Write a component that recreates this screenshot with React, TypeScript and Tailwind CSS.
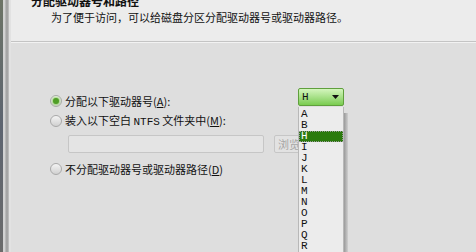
import { Fragment } from 'react';

const cjk = { fontFamily: '"Noto Sans CJK SC", "Liberation Sans", sans-serif' };
const mono = { fontFamily: '"Liberation Mono", "DejaVu Sans Mono", monospace' };

const letters = ['A', 'B', 'H', 'I', 'J', 'K', 'L', 'M', 'N', 'O', 'P', 'Q', 'R', 'S'];

function Radio({ checked }: { checked?: boolean }) {
  return (
    <span className="flex h-[12px] w-[12px] shrink-0 items-center justify-center rounded-full border border-[#a9a9a9] bg-gradient-to-b from-[#f4f4f4] to-[#d0d0d0]">
      {checked && (
        <span className="h-[6px] w-[6px] rounded-full bg-[#4f9e26] shadow-[0_0_2px_1px_#9fd77a]" />
      )}
    </span>
  );
}

function App() {
  return (
    <div className="flex h-[252px] w-[476px] overflow-hidden bg-[#dedede] text-[11px] text-[#111]" style={cjk}>
      {/* window behind + frame */}
      <div className="flex w-[11px] shrink-0">
        <div className="w-[3px] bg-gradient-to-b from-[#6d7466] via-[#5d6470] to-[#6b6b6b]" />
        <div className="w-[2px] bg-[#d2d2d2]" />
        <div className="w-[4px] bg-gradient-to-r from-[#c2c2c2] via-[#9c9c9c] to-[#c6c6c6]" />
        <div className="w-[2px] bg-[#e2e2e2]" />
      </div>

      <div className="relative flex flex-1 flex-col">
        {/* header */}
        <div className="h-[41px] bg-[#ececec]">
          <div className="mt-[-6px] pl-[20px] text-[12px] font-bold leading-[14px]">分配驱动器号和路径</div>
          <div className="mt-[2px] pl-[40px] leading-[14px]">为了便于访问，可以给磁盘分区分配驱动器号或驱动器路径。</div>
        </div>
        <div className="h-[1px] bg-[#c4c4c4]" />
        <div className="h-[1px] bg-[#f2f2f2]" />

        {/* body */}
        <div className="flex flex-col pl-[39px] pt-[51px]">
          <div className="flex h-[14px] items-center gap-[3px]">
            <Radio checked />
            <span>分配以下驱动器号(<span className="underline">A</span>):</span>
          </div>
          <div className="mt-[6px] flex h-[14px] items-center gap-[3px]">
            <Radio />
            <span>
              装入以下空白 <span style={mono}>NTFS</span> 文件夹中(<span className="underline">M</span>):
            </span>
          </div>
          <div className="mt-[7px] flex items-center pl-[18px]">
            <div className="h-[18px] w-[196px] rounded-[2px] border border-[#c6c6c6] bg-[#e4e4e4]" />
            <div className="ml-[10px] flex h-[18px] w-[70px] items-center rounded-[2px] border border-[#c6c6c6] bg-[#e2e2e2] pl-[3px] text-[#a6a6a6]">
              浏览(R)...
            </div>
          </div>
          <div className="mt-[9px] flex h-[14px] items-center gap-[3px]">
            <Radio />
            <span>不分配驱动器号或驱动器路径(<span className="underline">D</span>)</span>
          </div>
        </div>

        {/* drive letter combo with open list */}
        <div className="absolute left-[287px] top-[88px] flex w-[46px] flex-col">
          <div className="flex h-[18px] items-center justify-between rounded-[2px] border border-[#5f9f3c] bg-gradient-to-b from-[#d4f5bd] to-[#79cc4e] pl-[3px] pr-[4px]" style={mono}>
            <span className="text-[11px] leading-none">H</span>
            <svg width="7" height="4" viewBox="0 0 7 4">
              <path d="M0 0h7L3.5 4z" fill="#111" />
            </svg>
          </div>
          <div className="relative mt-[1px] flex h-[150px] flex-col border-l border-r border-[#b8b8b8] bg-[#ececec] pt-[2px]">
            {letters.map((l) => (
              <Fragment key={l}>
                {l === 'H' ? (
                  <div className="flex h-[11.25px] items-center bg-[#2a7a0c] pl-[2px] text-[11px] leading-none text-white outline-1 -outline-offset-1 outline-dotted outline-[#9a9a9a]" style={mono}>
                    {l}
                  </div>
                ) : (
                  <div className="flex h-[11.25px] items-center pl-[2px] text-[11px] leading-none" style={mono}>
                    {l}
                  </div>
                )}
              </Fragment>
            ))}
            <div className="absolute right-[-5px] top-[6px] h-[150px] w-[4px] bg-gradient-to-r from-[#9a9a9a] to-[#cfcfcf]" />
          </div>
        </div>
      </div>
    </div>
  );
}

export default App;
